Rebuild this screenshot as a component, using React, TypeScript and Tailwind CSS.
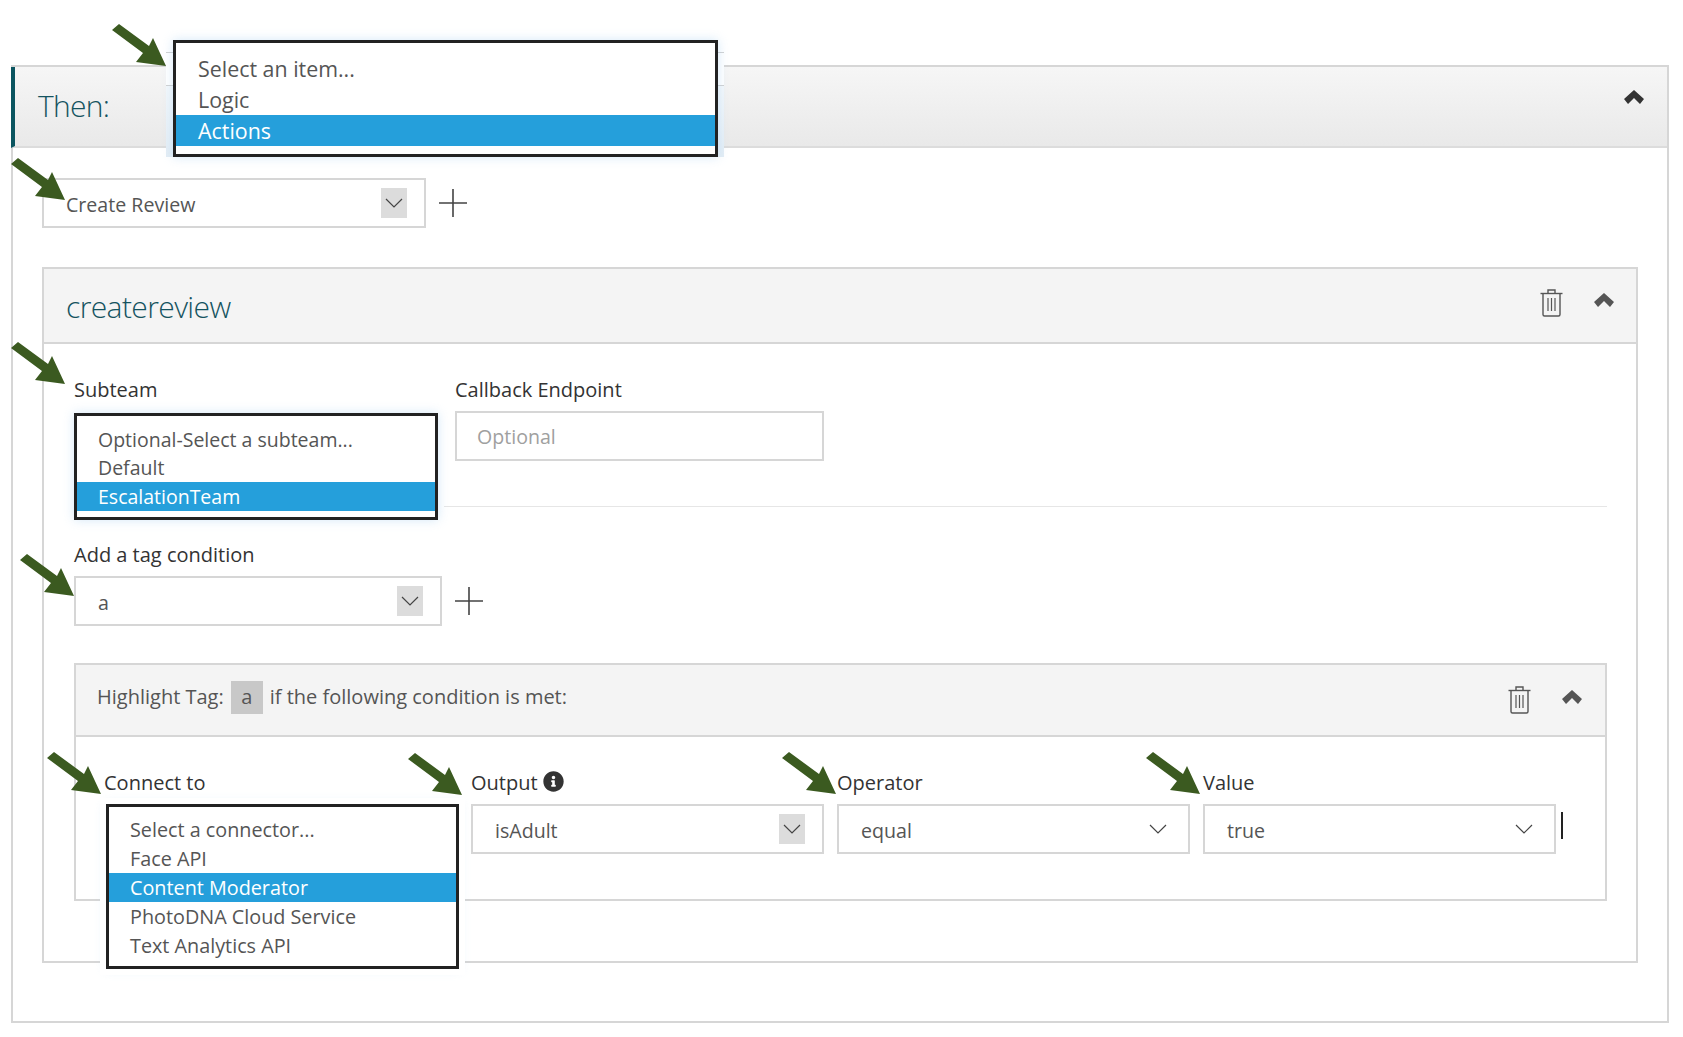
import { FaInfoCircle } from 'react-icons/fa'

const font = "font-['Open_Sans',sans-serif]"

function Arrow({ className }: { className: string }) {
  return (
    <svg className={`absolute z-30 ${className}`} width="54" height="42" viewBox="0 0 54 42">
      <polygon points="0,6 7,0 37,22 41,14 54,42 24,38 31,29" fill="#3b5a20" />
    </svg>
  )
}

function ChevronUp({ className }: { className: string }) {
  return (
    <svg className={className} viewBox="0 0 20 14">
      <polygon points="0,9 10,0 20,9 16,14 10,8 4,14" fill="currentColor" />
    </svg>
  )
}

function Trash({ className }: { className: string }) {
  return (
    <svg className={className} viewBox="0 0 23 28" fill="none" stroke="#555" strokeWidth="1.4">
      <path d="M0.5 4.5H22.5" />
      <path d="M8 4V1H15V4" />
      <path d="M3 5V25.5Q3 27 4.5 27H18.5Q20 27 20 25.5V5" />
      <path d="M8 9V22M11.5 9V22M15 9V22" strokeWidth="1.2" />
    </svg>
  )
}

function Caret({ boxed }: { boxed?: boolean }) {
  return (
    <span className={`flex h-[30px] w-[26px] items-center justify-center ${boxed ? 'bg-[#dcdcdc]' : ''}`}>
      <svg width="18" height="10" viewBox="0 0 18 10" fill="none" stroke="#444" strokeWidth="1.2">
        <path d="M1 1L9 9L17 1" />
      </svg>
    </span>
  )
}

function Plus() {
  return (
    <svg width="28" height="28" viewBox="0 0 28 28" stroke="#444" strokeWidth="1.6">
      <path d="M0 14H28M14 0V28" />
    </svg>
  )
}

function Select({ value, boxed, className }: { value: string; boxed?: boolean; className: string }) {
  return (
    <div className={`flex h-[50px] items-center justify-between border-2 border-[#d6d6d6] bg-white ${className}`}>
      <span className="pt-[3px] text-[19.6px] text-[#555]">{value}</span>
      <Caret boxed={boxed} />
    </div>
  )
}

function ListBox({ items, selected, className, rowClass, textClass }: {
  items: string[]
  selected: string
  className: string
  rowClass: string
  textClass: string
}) {
  return (
    <div className={`absolute z-20 border-[3px] border-[#222] bg-white shadow-[0_0_10px_rgba(160,205,240,0.45)] ${className}`}>
      {items.map((item) => (
        <div
          key={item}
          className={`flex items-center ${rowClass} ${textClass} ${item === selected ? 'bg-[#259fdb] text-white' : 'text-[#555]'}`}
        >
          {item}
        </div>
      ))}
    </div>
  )
}

function Label({ children }: { children: React.ReactNode }) {
  return <div className="flex h-7 items-center text-[20px] text-[#333]">{children}</div>
}

export default function App() {
  return (
    <div className={`relative h-[1037px] w-[1683px] overflow-hidden bg-white pl-[11px] pt-[65px] ${font}`}>
      {/* annotation arrows */}
      <Arrow className="left-[112px] top-[24px]" />
      <Arrow className="left-[11px] top-[158px]" />
      <Arrow className="left-[11px] top-[342px]" />
      <Arrow className="left-[20px] top-[554px]" />
      <Arrow className="left-[47px] top-[752px]" />
      <Arrow className="left-[408px] top-[753px]" />
      <Arrow className="left-[782px] top-[752px]" />
      <Arrow className="left-[1146px] top-[752px]" />

      {/* open "then" dropdown */}
      <div className="absolute left-[166px] top-[52px] z-20 h-[105px] w-[558px] border-t border-[#d0d0d0] bg-[linear-gradient(#ffffff_32px,#d0d0d0_32px,#d0d0d0_33px,#f4f8fb_33px,#e3edf5_100%)]">
        <ListBox
          className="left-[7px] top-[-13px] h-[117px] w-[545px] pt-[10px]"
          items={['Select an item...', 'Logic', 'Actions']}
          selected="Actions"
          rowClass="h-[31px] pl-[22px] pt-[2px]"
          textClass="text-[21.4px]"
        />
      </div>

      <div className="h-[958px] w-[1658px] border-2 border-[#d6d6d6]">
        <div className="ml-[-2px] flex h-[81px] items-center justify-between border-b-2 border-l-4 border-b-[#dcdcdc] border-l-[#0b5560] bg-gradient-to-b from-[#f6f6f6] to-[#e9e9e9] pl-[23px] pr-[23px]">
          <span className="mb-[2px] text-[30px] font-light tracking-[-0.7px] text-[#14535f]">Then:</span>
          <ChevronUp className="mb-[20px] h-[14px] w-5 text-[#333]" />
        </div>

        <div className="pl-[29px] pr-[30px] pt-[30px]">
          <div className="flex items-center gap-[13px]">
            <Select value="Create Review" boxed className="w-[384px] pl-[22px] pr-[17px]" />
            <Plus />
          </div>

          <div className="mt-[39px] h-[696px] w-[1596px] border-2 border-[#d6d6d6]">
            <div className="flex h-[75px] items-center justify-between border-b-2 border-[#d6d6d6] bg-[#f4f4f4] pl-[22px] pr-[22px]">
              <span className="pt-[2px] text-[30px] font-light tracking-[-0.6px] text-[#14535f]">createreview</span>
              <div className="mb-[5px] flex items-center gap-[31px]">
                <Trash className="h-7 w-[23px]" />
                <ChevronUp className="mb-[6px] h-[14px] w-5 text-[#555]" />
              </div>
            </div>

            <div className="pl-[30px] pr-[29px] pt-[32px]">
              <div className="flex gap-[16px]">
                <div className="relative w-[365px]">
                  <Label>Subteam</Label>
                  <ListBox
                    className="left-0 top-[37px] h-[107px] w-[364px] pt-[9px]"
                    items={['Optional-Select a subteam...', 'Default', 'EscalationTeam']}
                    selected="EscalationTeam"
                    rowClass="h-[28.5px] pl-[21px]"
                    textClass="text-[19.5px]"
                  />
                </div>
                <div className="w-[369px]">
                  <Label>Callback Endpoint</Label>
                  <div className="mt-[7px] flex h-[50px] items-center border-2 border-[#d6d6d6] pl-5 pt-[2px] text-[19.6px] text-[#a0a0a0]">
                    Optional
                  </div>
                </div>
              </div>

              <div className="ml-[370px] mt-[45px] h-px bg-[#e6e6e6]" />

              <div className="mt-[34px]">
                <Label>Add a tag condition</Label>
                <div className="mt-[7px] flex items-center gap-[13px]">
                  <Select value="a" boxed className="w-[368px] pl-[22px] pr-[17px]" />
                  <Plus />
                </div>
              </div>

              <div className="mt-[37px] h-[238px] w-[1533px] border-2 border-[#d6d6d6]">
                <div className="flex h-[72px] items-center justify-between border-b-2 border-[#d6d6d6] bg-[#f4f4f4] pl-[21px] pr-[23px]">
                  <div className="mb-[6px] flex items-center gap-[7px] text-[20px] text-[#555]">
                    <span>Highlight Tag:</span>
                    <span className="flex h-[33px] w-[32px] items-center justify-center bg-[#c8c8c8]">a</span>
                    <span>if the following condition is met:</span>
                  </div>
                  <div className="flex items-center gap-[31px]">
                    <Trash className="h-7 w-[23px]" />
                    <ChevronUp className="mb-[6px] h-[14px] w-5 text-[#555]" />
                  </div>
                </div>

                <div className="flex gap-[13px] pl-[28px] pt-[32px]">
                  <div className="relative w-[354px]">
                    <Label>Connect to</Label>
                    <ListBox
                      className="left-[2px] top-[35px] h-[165px] w-[353px] pt-[8px] outline-[6px] outline-white"
                      items={['Select a connector...', 'Face API', 'Content Moderator', 'PhotoDNA Cloud Service', 'Text Analytics API']}
                      selected="Content Moderator"
                      rowClass="h-[29px] pl-[21px]"
                      textClass="text-[19.8px]"
                    />
                  </div>
                  <div className="w-[353px]">
                    <Label>
                      Output
                      <FaInfoCircle className="ml-[5px] mt-[-3px] text-[21px] text-[#333]" />
                    </Label>
                    <Select value="isAdult" boxed className="mt-[7px] pl-[22px] pr-[17px]" />
                  </div>
                  <div className="w-[353px]">
                    <Label>Operator</Label>
                    <Select value="equal" className="mt-[7px] pl-[22px] pr-[17px]" />
                  </div>
                  <div className="relative w-[353px]">
                    <Label>Value</Label>
                    <Select value="true" className="mt-[7px] pl-[22px] pr-[17px]" />
                    <div className="absolute left-[358px] top-[43px] h-[27px] w-[2px] bg-[#222]" />
                  </div>
                </div>
              </div>
            </div>
          </div>
        </div>
      </div>
    </div>
  )
}
